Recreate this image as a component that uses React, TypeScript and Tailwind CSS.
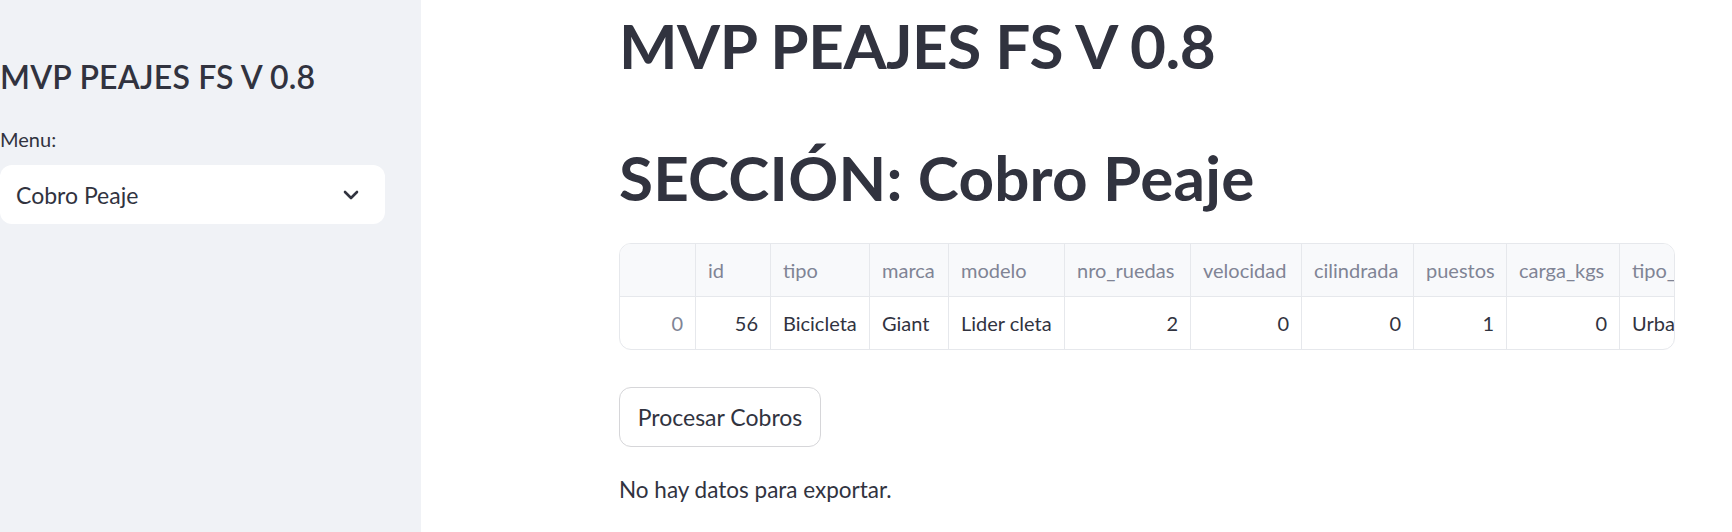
import React from "react";
import { ChevronDown } from "lucide-react";

const cols = [
  { name: "", w: 77, val: "0", right: true, idx: true },
  { name: "id", w: 75, val: "56", right: true },
  { name: "tipo", w: 99, val: "Bicicleta", right: false },
  { name: "marca", w: 79, val: "Giant", right: false },
  { name: "modelo", w: 116, val: "Lider cleta", right: false },
  { name: "nro_ruedas", w: 126, val: "2", right: true },
  { name: "velocidad", w: 111, val: "0", right: true },
  { name: "cilindrada", w: 112, val: "0", right: true },
  { name: "puestos", w: 93, val: "1", right: true },
  { name: "carga_kgs", w: 113, val: "0", right: true },
  { name: "tipo_vehiculo", w: 160, val: "Urbana", right: false },
];

export default function App() {
  return (
    <div
      className="flex h-[532px] w-[1732px] overflow-hidden bg-white text-[#31333f]"
      style={{ fontFamily: "Lato, 'Noto Sans', sans-serif" }}
    >
      <aside className="flex h-full w-[421px] shrink-0 flex-col bg-[#f0f2f6] pr-[36px]">
        <h2 className="mt-[58px] text-[32px] font-semibold leading-[1.2] whitespace-nowrap tracking-[0.2px]">
          MVP PEAJES FS V 0.8
        </h2>
        <div className="mt-[31px] text-[20px] leading-[1.2]">Menu:</div>
        <div className="mt-[14px] flex h-[59px] items-center justify-between rounded-[12px] bg-white pl-[16px] pr-[22px]">
          <span className="text-[23px]">Cobro Peaje</span>
          <ChevronDown size={24} strokeWidth={2.6} className="text-[#31333f]" />
        </div>
      </aside>
      <main className="flex min-w-0 flex-1 flex-col pl-[198px]">
        <div className="flex w-[1056px] flex-col">
          <h1 className="mt-[8px] text-[62px] font-bold leading-[1.2] whitespace-nowrap tracking-[-0.5px]">
            MVP PEAJES FS V 0.8
          </h1>
          <h1 className="mt-[58px] text-[62px] font-bold leading-[1.2] whitespace-nowrap tracking-[0.2px]">
            SECCIÓN: Cobro Peaje
          </h1>
          <div className="mt-[28px] h-[107px] overflow-hidden rounded-[12px] border border-[#e6e8ec]">
            <div className="flex h-[53px] border-b border-[#e6e8ec] bg-[#f8f9fb]">
              {cols.map((c, i) => (
                <div
                  key={i}
                  className="flex shrink-0 items-center border-r border-[#e6e8ec] px-[12px] text-[20px] text-[#808495] whitespace-nowrap"
                  style={{ width: c.w - (i === 0 ? 1 : 0) }}
                >
                  {c.name}
                </div>
              ))}
            </div>
            <div className="flex h-[52px]">
              {cols.map((c, i) => (
                <div
                  key={i}
                  className={
                    "flex shrink-0 items-center border-r border-[#e6e8ec] px-[12px] text-[20px] whitespace-nowrap " +
                    (c.right ? "justify-end " : "justify-start ") +
                    (c.idx ? "text-[#808495]" : "text-[#31333f]")
                  }
                  style={{ width: c.w - (i === 0 ? 1 : 0) }}
                >
                  {c.val}
                </div>
              ))}
            </div>
          </div>
          <div className="mt-[37px]">
            <button className="h-[60px] w-[202px] rounded-[12px] border border-[#d6d6d9] bg-white text-[23px] text-[#31333f]">
              Procesar Cobros
            </button>
          </div>
          <p className="mt-[29px] text-[22.5px] leading-[1.2]">No hay datos para exportar.</p>
        </div>
      </main>
    </div>
  );
}
